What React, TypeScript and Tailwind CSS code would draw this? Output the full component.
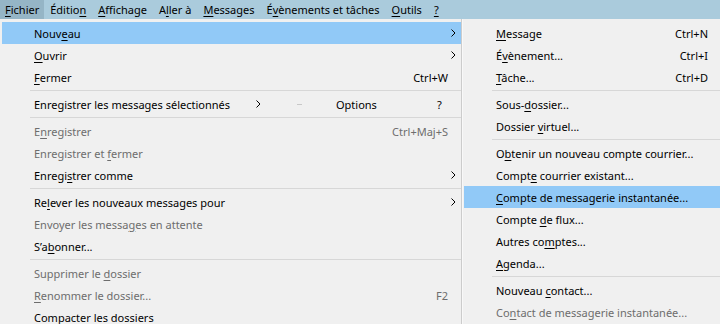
import React from 'react';

type Item =
  | 'sep'
  | {
      label: string;
      shortcut?: string;
      arrow?: boolean;
      disabled?: boolean;
      active?: boolean;
      special?: boolean;
    };

const menuBar = ['&Fichier', 'Éditio&n', '&Affichage', 'A&ller à', '&Messages', 'É&vènements et tâches', '&Outils', '&?'];

const fileMenu: Item[] = [
  { label: 'Nouv&eau', arrow: true, active: true },
  { label: '&Ouvrir', arrow: true },
  { label: '&Fermer', shortcut: 'Ctrl+W' },
  'sep',
  { label: 'Enregistrer les messages sélectionnés', special: true },
  'sep',
  { label: 'E&nregistrer', shortcut: 'Ctrl+Maj+S', disabled: true },
  { label: 'Enregistrer et &fermer', disabled: true },
  { label: 'Enregi&strer comme', arrow: true },
  'sep',
  { label: 'Re&lever les nouveaux messages pour', arrow: true },
  { label: 'Envoyer les messa&ges en attente', disabled: true },
  { label: 'S’a&bonner...' },
  'sep',
  { label: 'Supprimer le &dossier', disabled: true },
  { label: '&Renommer le dossier...', shortcut: 'F2', disabled: true },
  { label: '&Compacter les dossiers' },
];

const newMenu: Item[] = [
  { label: '&Message', shortcut: 'Ctrl+N' },
  { label: 'É&vènement...', shortcut: 'Ctrl+I' },
  { label: '&Tâche...', shortcut: 'Ctrl+D' },
  'sep',
  { label: 'Sous-&dossier...' },
  { label: 'Dossier &virtuel...' },
  'sep',
  { label: 'O&btenir un nouveau compte courrier...' },
  { label: 'Compt&e courrier existant...' },
  { label: '&Compte de messagerie instantanée...', active: true },
  { label: 'Compte &de flux...' },
  { label: 'Autres co&mptes...' },
  { label: '&Agenda...' },
  'sep',
  { label: 'Nouveau &contact...' },
  { label: 'Co&ntact de messagerie instantanée...', disabled: true },
];

function Label({ text }: { text: string }) {
  const i = text.indexOf('&');
  if (i < 0) return <span>{text}</span>;
  return (
    <span className="whitespace-pre">
      {text.slice(0, i)}
      <span className="underline underline-offset-[2px] decoration-[1px]">{text[i + 1]}</span>
      {text.slice(i + 2)}
    </span>
  );
}

function Chevron({ color = '#000' }: { color?: string }) {
  return (
    <svg width="5" height="8" viewBox="0 0 5 8" className="block">
      <polyline points="0.5,0.5 4,4 0.5,7.5" fill="none" stroke={color} strokeWidth="1" />
    </svg>
  );
}

function Separator({ indent }: { indent: string }) {
  return (
    <div className={`h-[5px] flex items-center ${indent}`}>
      <div className="h-px w-full bg-[#d7d7d7]" />
    </div>
  );
}

function Row({ item, sub }: { item: Exclude<Item, 'sep'>; sub?: boolean }) {
  const text = item.disabled ? 'text-[#6d6d6d]' : 'text-black';
  if (item.special) {
    return (
      <div className="h-[22px] flex items-center pl-[32px] text-black">
        <span className="w-[222px] whitespace-nowrap">
          <Label text={item.label} />
        </span>
        <span className="w-[41px]">
          <Chevron />
        </span>
        <span className="w-[39px] h-px flex">
          <span className="w-[5px] h-px bg-[#c8c8c8]" />
        </span>
        <span className="w-[101px]">Options</span>
        <span>?</span>
      </div>
    );
  }
  return (
    <div
      className={`h-[22px] flex items-center whitespace-nowrap ${text} ${
        item.active ? 'bg-[#91c9f7]' : ''
      } ${sub ? 'pl-[32px] pr-[12px]' : 'pl-[32px]'}`}
    >
      <span className="flex-1">
        <Label text={item.label} />
      </span>
      {item.shortcut && <span>{item.shortcut}</span>}
      {!sub && (
        <span className="w-[13px] flex justify-end pr-[5px]">{item.arrow && <Chevron />}</span>
      )}
    </div>
  );
}

export default function App() {
  return (
    <div
      className="w-[720px] h-[324px] overflow-hidden bg-[#f0f0f0] text-[11px] leading-none"
      style={{ fontFamily: '"Noto Sans", "DejaVu Sans", sans-serif' }}
    >
      {/* Menu bar */}
      <div className="h-[19px] flex items-stretch bg-[#aacbdc]">
        {menuBar.map((m, i) => (
          <div
            key={m}
            className={`flex items-center px-[6px] text-black ${
              i === 0 ? 'pl-[5px] pr-[5px] bg-[#95b5c6]' : ''
            }`}
          >
            <Label text={m} />
          </div>
        ))}
      </div>

      <div className="flex">
        {/* Fichier menu */}
        <div className="w-[462px] pl-[2px] pt-[3px] border-r border-[#cccccc]">
          {fileMenu.map((it, i) =>
            it === 'sep' ? <Separator key={i} indent="pl-[28px]" /> : <Row key={i} item={it} />
          )}
        </div>

        {/* Nouveau submenu */}
        <div className="flex-1 pl-[1px] pt-[3px] border-l border-[#f8f8f8]">
          {newMenu.map((it, i) =>
            it === 'sep' ? <Separator key={i} indent="pl-[28px]" /> : <Row key={i} item={it} sub />
          )}
        </div>
      </div>
    </div>
  );
}
